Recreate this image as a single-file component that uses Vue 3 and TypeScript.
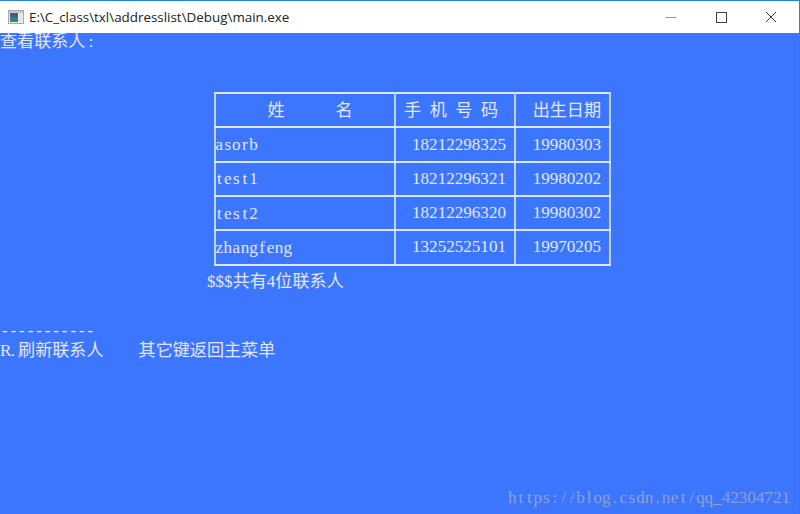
<script setup lang="ts">
interface Contact { name: string; phone: string; birth: string }
const contacts: Contact[] = [
  { name: 'asorb', phone: '18212298325', birth: '19980303' },
  { name: 'test1', phone: '18212296321', birth: '19980202' },
  { name: 'test2', phone: '18212296320', birth: '19980302' },
  { name: 'zhangfeng', phone: '13252525101', birth: '19970205' },
]
const watermark = 'https://blog.csdn.net/qq_42304721'
const chars = (s: string): string[] => s.split('')
</script>

<template>
  <div class="window">
    <header class="titlebar">
      <svg class="app-icon" width="16" height="14" viewBox="0 0 16 14">
        <rect x="0.5" y="0.5" width="15" height="13" fill="#f2f2f2" stroke="#a8a8a8" />
        <rect x="1" y="1" width="14" height="2" fill="#c8c8c8" />
        <rect x="2" y="3" width="8" height="9" fill="#3f7f78" />
        <rect x="2" y="3" width="8" height="4" fill="#40608a" />
        <rect x="11" y="3" width="3" height="9" fill="#e4e4e4" />
      </svg>
      <span class="title">E:\C_class\txl\addresslist\Debug\main.exe</span>
      <div class="controls">
        <span class="control"><svg width="12" height="12" viewBox="0 0 12 12"><path d="M0.5 6.5H11.5" stroke="#999" fill="none" /></svg></span>
        <span class="control"><svg width="12" height="12" viewBox="0 0 12 12"><rect x="1.5" y="1.5" width="10" height="10" stroke="#444" fill="none" /></svg></span>
        <span class="control"><svg width="12" height="12" viewBox="0 0 12 12"><path d="M1 1L11 11M11 1L1 11" stroke="#333" fill="none" /></svg></span>
      </div>
    </header>
    <main class="console">
      <div class="line">查看联系人<span class="colon">:</span></div>
      <table class="contacts">
        <thead>
          <tr>
            <th class="col-name"><span class="name-head"><span>姓</span><span>名</span></span></th>
            <th class="col-phone"><span class="wide">手机号码</span></th>
            <th class="col-birth">出生日期</th>
          </tr>
        </thead>
        <tbody>
          <tr v-for="c in contacts" :key="c.name">
            <td class="name"><span v-for="(ch, i) in chars(c.name)" :key="i" class="cell">{{ ch }}</span></td>
            <td class="num">{{ c.phone }}</td>
            <td class="num">{{ c.birth }}</td>
          </tr>
        </tbody>
      </table>
      <div class="line count">$$$共有4位联系人</div>
      <div class="line dashes">-----------</div>
      <div class="line menu"><span class="cell">R</span><span class="cell">.</span><span class="menu-label">刷新联系人</span><span class="menu-gap"></span>其它键返回主菜单</div>
    </main>
    <div class="watermark"><span v-for="(ch, i) in chars(watermark)" :key="i" class="cell">{{ ch }}</span></div>
  </div>
</template>

<style>
html, body { margin: 0; padding: 0; }
</style>

<style scoped>
.window {
  position: relative;
  width: 800px;
  height: 514px;
  box-sizing: border-box;
  overflow: hidden;
  background: #3c76ff;
  border-right: 1px solid #1f86e0;
  display: flex;
  flex-direction: column;
}
.titlebar {
  height: 33px;
  box-sizing: border-box;
  flex: none;
  display: flex;
  align-items: center;
  background: #fff;
  border-top: 1px solid #1f86e0;
  padding-left: 8px;
}
.app-icon { flex: none; margin-right: 5px; }
.title {
  font: 13.4px "Open Sans", "Noto Sans", sans-serif;
  color: #222;
  white-space: nowrap;
}
.controls { margin-left: auto; display: flex; padding-right: 3px; }
.control {
  width: 50px;
  height: 32px;
  display: flex;
  align-items: center;
  justify-content: center;
}
.console {
  flex: 1;
  color: #e2e6ff;
  font: 17.1px/17.15px "Liberation Serif", "Noto Sans CJK SC", serif;
}
.line { height: 17.15px; white-space: pre; }
.colon { margin-left: 3px; }
.contacts {
  margin: 42px 0 0 214px;
  border-collapse: collapse;
  table-layout: fixed;
  width: 395px;
}
th, td {
  box-sizing: border-box;
  height: 34.3px;
  padding: 0;
  border-style: solid;
  border-width: 2px;
  border-color: #dbe7ff #bcd4ff;
  font-weight: 400;
  line-height: 17px;
}
.col-name { width: 180px; }
.col-phone { width: 120px; }
.col-birth { width: 95px; text-align: right; padding-right: 8px; }
.name-head { display: flex; justify-content: center; gap: 51px; margin-left: 10px; }
.wide { letter-spacing: 8.55px; display: block; padding-left: 8px; text-align: left; }
.cell {
  display: inline-block;
  width: 8.55px;
  text-align: center;
}
.name { white-space: nowrap; }
.name .cell:first-child { margin-left: -1px; }
.num {
  text-align: right;
  padding-right: 8px;
  padding-bottom: 1px;
}
.count { margin: 7px 0 0 207px; }
.dashes {
  margin-top: 34px;
  font: 16px/17px "Liberation Mono", monospace;
  letter-spacing: -1.05px;
}
.menu { margin-top: 1px; }
.menu-label { margin-left: 1px; }
.menu-gap { display: inline-block; width: 35px; }
.watermark {
  position: absolute;
  right: 9px;
  bottom: 8px;
  font: 17.1px/17px "Liberation Serif", serif;
  color: #8da0d4;
  white-space: nowrap;
}
</style>
